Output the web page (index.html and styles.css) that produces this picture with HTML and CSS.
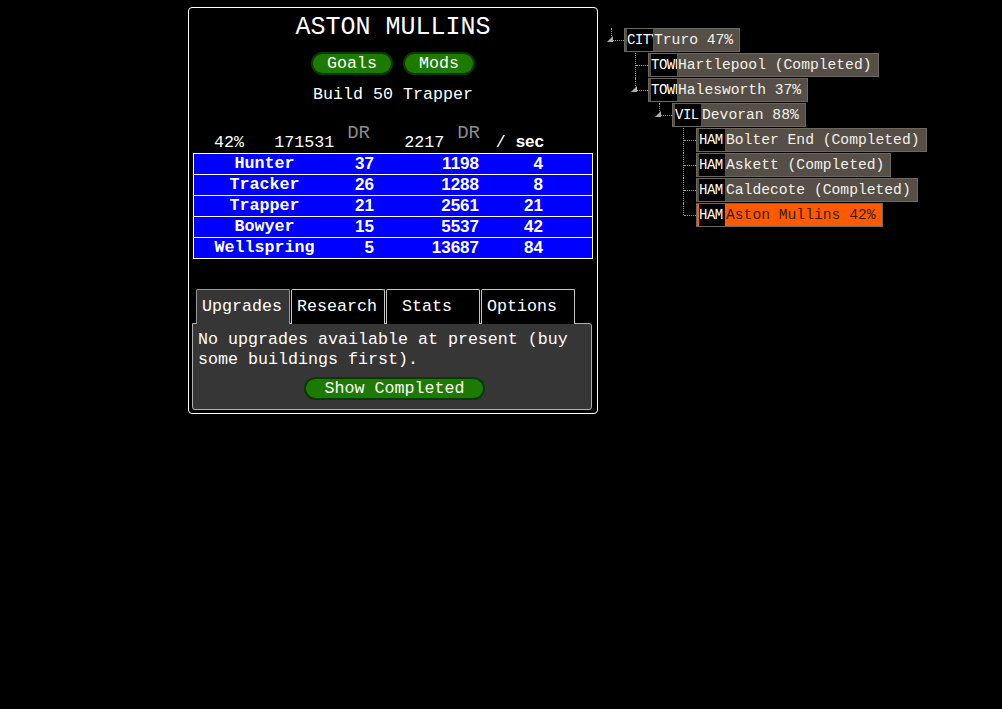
FILE: index.html
```html
<!DOCTYPE html>
<html>
<head>
<meta charset="utf-8">
<link rel="stylesheet" href="styles.css">
</head>
<body>
<div class="page">
  <div class="panel">
    <h1 class="title">ASTON MULLINS</h1>
    <div class="btns">
      <button class="pill">Goals</button>
      <button class="pill">Mods</button>
    </div>
    <div class="goal">Build 50 Trapper</div>
    <div class="head">
      <div class="hcell hcell-a"><span>42%</span><span>171531<span class="dr">DR</span></span></div>
      <div class="hcell hcell-b"><span>2217<span class="dr">DR</span></span></div>
      <div class="hcell hcell-c"><span>/ <span class="sans">sec</span></span></div>
    </div>
    <div class="table">
      <div class="trow"><span class="tname">Hunter</span><span class="tnum">37</span><span class="tnum">1198</span><span class="tnum">4</span></div>
      <div class="trow"><span class="tname">Tracker</span><span class="tnum">26</span><span class="tnum">1288</span><span class="tnum">8</span></div>
      <div class="trow"><span class="tname">Trapper</span><span class="tnum">21</span><span class="tnum">2561</span><span class="tnum">21</span></div>
      <div class="trow"><span class="tname">Bowyer</span><span class="tnum">15</span><span class="tnum">5537</span><span class="tnum">42</span></div>
      <div class="trow"><span class="tname">Wellspring</span><span class="tnum">5</span><span class="tnum">13687</span><span class="tnum">84</span></div>
    </div>
    <div class="tabs">
      <div class="tab tab-active">Upgrades</div>
      <div class="tab">Research</div>
      <div class="tab tab-wide">Stats</div>
      <div class="tab">Options</div>
    </div>
    <div class="tabpanel">
      <p class="msg">No upgrades available at present (buy some buildings first).</p>
      <div class="btns"><button class="pill pill-wide">Show Completed</button></div>
    </div>
  </div>

  <div class="tree">
    <div class="row">
      <span class="conn c-exp"><i class="exp"></i></span>
      <span class="node"><span class="kind">CITY</span><span class="name">Truro 47%</span></span>
    </div>
    <div class="row lvl1">
      <span class="conn c-mid"></span>
      <span class="node"><span class="kind">TOWN</span><span class="name">Hartlepool (Completed)</span></span>
    </div>
    <div class="row lvl1">
      <span class="conn c-exp"><i class="exp"></i></span>
      <span class="node"><span class="kind">TOWN</span><span class="name">Halesworth 37%</span></span>
    </div>
    <div class="row lvl2">
      <span class="conn c-exp"><i class="exp"></i></span>
      <span class="node"><span class="kind">VIL</span><span class="name">Devoran 88%</span></span>
    </div>
    <div class="row lvl3">
      <span class="conn c-mid"></span>
      <span class="node"><span class="kind">HAM</span><span class="name">Bolter End (Completed)</span></span>
    </div>
    <div class="row lvl3">
      <span class="conn c-mid"></span>
      <span class="node"><span class="kind">HAM</span><span class="name">Askett (Completed)</span></span>
    </div>
    <div class="row lvl3">
      <span class="conn c-mid"></span>
      <span class="node"><span class="kind">HAM</span><span class="name">Caldecote (Completed)</span></span>
    </div>
    <div class="row lvl3">
      <span class="conn c-end"></span>
      <span class="node node-active"><span class="kind">HAM</span><span class="name">Aston Mullins 42%</span></span>
    </div>
  </div>
</div>
</body>
</html>
```

FILE: styles.css
```css
html, body {
  margin: 0;
  padding: 0;
  background: #000;
  color: #fff;
  font-family: "Liberation Mono", "Courier New", monospace;
  font-size: 16.67px;
}

.page {
  display: flex;
  align-items: flex-start;
  gap: 2px;
  padding: 7px 0 0 188px;
}

/* ---------- main panel ---------- */
.panel {
  box-sizing: border-box;
  width: 410px;
  border: 1px solid #fff;
  border-radius: 4px;
  padding: 0 4px 3px 4px;
}

.title {
  margin: 5px 0 0 0;
  font-size: 25px;
  font-weight: normal;
  line-height: 30px;
  text-align: center;
}

.btns {
  display: flex;
  justify-content: center;
  gap: 10px;
}

.panel > .btns {
  margin-top: 9px;
}

.pill {
  box-sizing: border-box;
  height: 23px;
  padding: 0 14px;
  border: 2px solid #0b3a00;
  border-radius: 12px;
  background: #1d7a00;
  color: #fff;
  font-family: "Liberation Mono", "Courier New", monospace;
  font-size: 16.67px;
  line-height: 19px;
}

.pill-wide {
  padding: 0 19px;
}

.goal {
  margin-top: 10px;
  line-height: 20px;
  text-align: center;
}

.head {
  display: grid;
  grid-template-columns: 181px 105px 64px;
  margin-top: 28px;
  padding-left: 1px;
  height: 20px;
  line-height: 20px;
}

.hcell {
  display: flex;
  align-items: flex-end;
  justify-content: flex-end;
  height: 20px;
  white-space: nowrap;
}

.hcell-a {
  justify-content: space-between;
  padding: 0 5px 0 20px;
}

.dr {
  margin-left: 13px;
  font-size: 19px;
  vertical-align: 9px;
  color: #8a8a8a;
}

.sans {
  font-family: "Liberation Sans", Arial, sans-serif;
  font-weight: bold;
  font-size: 17px;
}

.table {
  border: 1px solid #fff;
  background: #0000ff;
}

.trow {
  display: grid;
  grid-template-columns: 141px 40px 105px 64px;
  height: 20px;
  line-height: 20px;
  border-bottom: 1px solid #fff;
}

.trow:last-child {
  border-bottom: none;
}

.tname {
  text-align: center;
  font-weight: bold;
}

.tnum {
  text-align: right;
  padding-right: 1px;
  font-family: "Liberation Sans", Arial, sans-serif;
  font-weight: bold;
  font-size: 17px;
}

/* ---------- tabs ---------- */
.tabs {
  display: flex;
  gap: 1px;
  margin-top: 30px;
  padding-left: 3px;
}

.tab {
  position: relative;
  box-sizing: border-box;
  width: 94px;
  height: 35px;
  margin-bottom: -1px;
  padding: 7px 0 0 5px;
  border: 1px solid #c8c8c8;
  border-bottom: none;
  border-radius: 2px 2px 0 0;
  background: #000;
  line-height: 20px;
}

.tab-active {
  z-index: 1;
  background: #363636;
  border-color: #9a9a9a;
}

.tab-wide {
  padding-left: 15px;
}

.tabpanel {
  margin: 0 1px 0 -1px;
  border: 1px solid #b0b0b0;
  border-radius: 0 3px 3px 3px;
  background: #363636;
  padding: 6px 0 9px 5px;
}

.msg {
  margin: 0 0 7px 0;
  line-height: 20px;
}

/* ---------- tree ---------- */
.tree {
  margin-top: 21px;
  font-size: 14.67px;
}

.row {
  display: flex;
  height: 25px;
}

.lvl1 { padding-left: 24px; }
.lvl2 { padding-left: 48px; }
.lvl3 { padding-left: 72px; }

.conn {
  position: relative;
  flex: none;
  width: 24px;
  height: 25px;
}

.conn::before {
  content: "";
  position: absolute;
  left: 11px;
  top: 0;
  height: 12px;
  border-left: 1px dotted #9a9a9a;
}

.conn::after {
  content: "";
  position: absolute;
  left: 12px;
  top: 12px;
  width: 12px;
  border-top: 1px dotted #9a9a9a;
}

.c-mid::before { height: 25px; }
.c-exp::before { height: 8px; }
.c-exp::after { left: 13px; width: 11px; }

.exp {
  position: absolute;
  left: 7px;
  top: 8px;
  width: 0;
  height: 0;
  border-left: 6px solid transparent;
  border-bottom: 6px solid #b0b0b0;
}

.node {
  display: flex;
  box-sizing: border-box;
  height: 24px;
  padding: 0 6px 0 2px;
  border: 1px solid #6e685f;
  background: #554f47;
  line-height: 22px;
  white-space: nowrap;
}

.kind {
  width: 26px;
  overflow: hidden;
  background: #000;
  color: #fff;
  font-size: 14px;
  letter-spacing: -0.5px;
}

.name {
  margin-left: 1px;
  color: #f4f1ea;
}

.node-active {
  background: #ff5a00;
}

.node-active .name {
  color: #3a1c08;
}
```
